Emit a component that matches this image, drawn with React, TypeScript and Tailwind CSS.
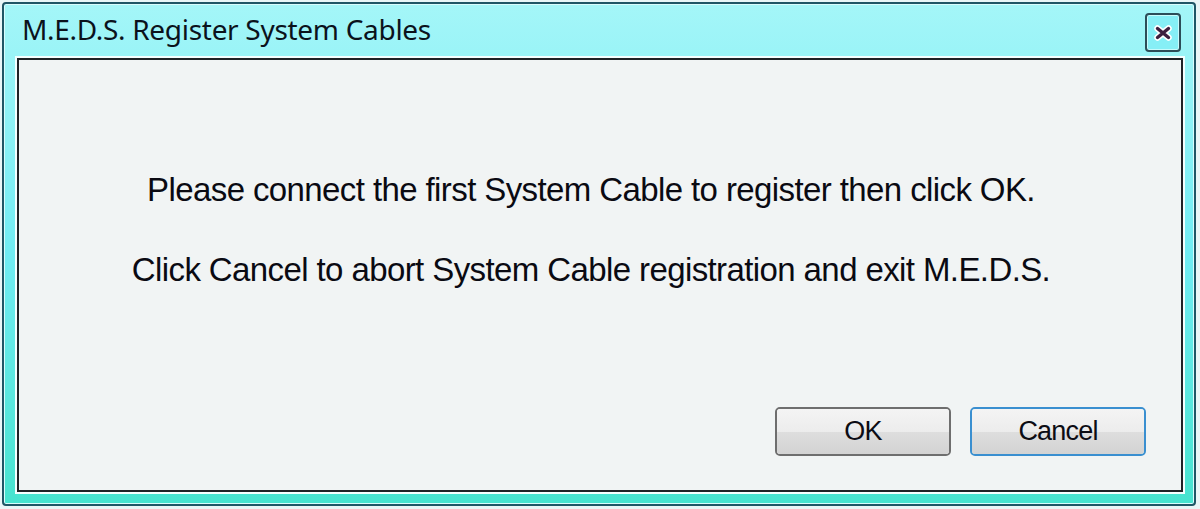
import React from 'react'

function CloseGlyph() {
  return (
    <svg width="20" height="16" viewBox="0 0 20 16">
      <path d="M4.5 3.5 L15.5 12.5 M15.5 3.5 L4.5 12.5" stroke="#ffffff" strokeWidth="6.5" strokeLinecap="round" />
      <path d="M4.5 3.5 L15.5 12.5 M15.5 3.5 L4.5 12.5" stroke="#3d1f3f" strokeWidth="3.4" strokeLinecap="round" />
    </svg>
  )
}

function DialogButton({ label, focused }: { label: string; focused?: boolean }) {
  return (
    <button
      className={
        'relative w-[176px] h-[49px] rounded-[5px] border-2 overflow-hidden ' +
        (focused
          ? 'border-[#3a8fd0] shadow-[inset_0_0_0_2px_#9ef3fb]'
          : 'border-[#6e6e6e] shadow-[inset_0_0_0_2px_#fbfbfb]')
      }
    >
      <div className="absolute inset-0 flex flex-col">
        <div className="h-1/2 bg-gradient-to-b from-[#f4f4f4] to-[#ececec]" />
        <div className="h-1/2 bg-gradient-to-b from-[#dedede] to-[#d3d3d3]" />
      </div>
      <span className="relative text-[27px] leading-none tracking-[-0.8px] text-[#0c0c14] font-['Liberation_Sans',Arial,sans-serif]">
        {label}
      </span>
    </button>
  )
}

export default function App() {
  return (
    <div className="w-[1200px] h-[509px] bg-[#e9f6f7] p-[2px]">
      <div className="w-[1194px] h-[504px] rounded-[4px] border-2 border-[#1f5666] bg-gradient-to-b from-[#a4f6f8] via-[#70ecf3] to-[#46e3cf] shadow-[inset_0_0_0_1px_#d8fdfd] flex flex-col">
        {/* title bar */}
        <div className="h-[54px] flex items-start justify-between pl-[18px] pr-[13px]">
          <div className="pt-[8px] text-[28px] leading-[34px] tracking-[-0.3px] text-[#0b121c] font-['Noto_Sans','Open_Sans',sans-serif]">
            M.E.D.S. Register System Cables
          </div>
          <div className="mt-[9px] w-[36px] h-[39px] rounded-[4px] border-2 border-[#2c4d58] bg-[#86eff6] shadow-[inset_0_0_0_1px_#c9fbfc] flex items-center justify-center">
            <CloseGlyph />
          </div>
        </div>

        {/* content panel */}
        <div className="flex-1 ml-[13px] mr-[11px] mb-[12px] border-2 border-[#1e2226] shadow-[0_0_0_2px_#f4ffff] bg-[#f1f4f4] flex flex-col">
          <div className="pt-[111px] flex flex-col items-center gap-[42px] pr-[18px] text-[33px] leading-[38px] tracking-[-0.6px] text-[#0a0a12] font-['Liberation_Sans',Arial,sans-serif]">
            <p>Please connect the first System Cable to register then click OK.</p>
            <p>Click Cancel to abort System Cable registration and exit M.E.D.S.</p>
          </div>
          <div className="flex-1" />
          <div className="flex justify-end gap-[19px] pr-[35px] pb-[34px]">
            <DialogButton label="OK" />
            <DialogButton label="Cancel" focused />
          </div>
        </div>
      </div>
    </div>
  )
}
